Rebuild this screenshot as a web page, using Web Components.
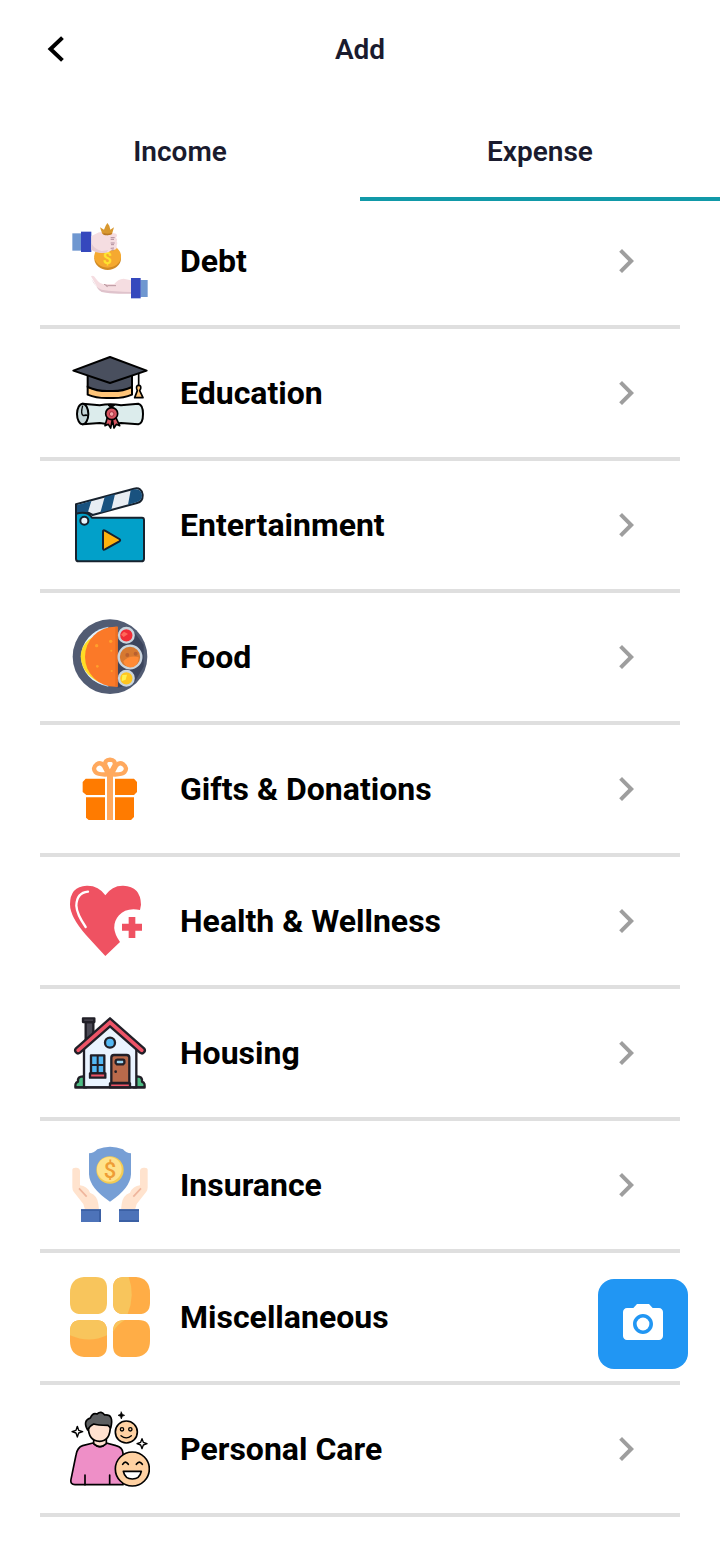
<!DOCTYPE html>
<html lang="en">
<head>
<meta charset="utf-8">
<meta name="viewport" content="width=device-width, initial-scale=1">
<title>Add</title>
<style>
    body {
        margin: 0;
        background: #fff;
        color: #000;
        font-family: Roboto, "Liberation Sans", sans-serif;
    }
</style>
</head>
<body>
<add-page></add-page>

<script>
// every category drawing shares the same 240x240 canvas
const ICONS = {
    debt: `
        <path fill="#6f97d0" d="M37 55h28v52H37z"/>
        <path fill="#3548bd" d="M63 50h31v61H63z"/>
        <ellipse cx="143" cy="130" rx="40" ry="35" fill="#d08a25"/>
        <ellipse cx="143" cy="124" rx="40" ry="34" fill="#f5a930"/>
        <text x="142" y="148" text-anchor="middle" font-size="48" font-weight="700" fill="#ffe32e">$</text>
        <path fill="#f5dde1" d="M94 63l14-7q8-6 18-5l36 4q10 1 9 8l-3 5q6 5 2 11 5 6 0 13 2 10-6 12l-10 2-9 6-20 2q-16-3-31-11z"/>
        <path fill="#e6cad1" d="M94 84q8 18 31 24l20-3-7 8q-26 3-44-9z"/>
        <path stroke="#b08c9c" stroke-width="3" fill="none" d="M152 68h12M152 73h10M152 84h12M153 89h9M152 100l10-1M155 105h6"/>
        <path fill="#d8982f" d="M127 57l-7-20 12 7 5-12 5-8 6 8 3 12 11-7-6 20-13 4z"/>
        <path fill="#b87725" d="M130 54q13 5 25 0v4q-12 5-25 1z"/>
        <path fill="#f5dde1" d="M93 184q3-4 9 0l12 15q10 11 21 8h28q10-15 28-16l22 5v39h-36q-30 0-52-5-7-3-12-11z"/>
        <path fill="#dfc3cc" d="M94 191q12 27 31 33 38 6 88 7v5h-36q-30 0-52-5-8-4-13-12z"/>
        <path stroke="#b9969e" stroke-width="3" fill="none" d="M132 208l10 4h26M137 212l6 3"/>
        <path fill="#6f97d0" d="M241 195h22v51h-22z"/>
        <path fill="#3548bd" d="M213 189h29v61h-29z"/>`,
    education: `
        <g stroke="#000" stroke-width="6" stroke-linejoin="round">
            <path fill="#ffc579" d="M83 118v25q29 12 67 10 38 2 66-10v-25z"/>
            <path fill="#494f5e" d="M83 83v37q31 14 67 12 36 2 66-12V83z"/>
            <path fill="#494f5e" d="M40 71l110-41 110 41-110 37z"/>
            <path fill="none" stroke-width="5" d="M236 81v36"/>
            <path fill="#ffc579" stroke-width="5" d="M230 125q-2-10 6-10t6 10l-3 6 10 21h-25l8-21z"/>
            <path fill="#dcecec" d="M68 170l51 5q32-6 64 0l52-5q14 3 14 31t-14 31l-52-4q-32 6-64 0l-51 4z"/>
            <ellipse cx="68" cy="201" rx="17" ry="31" fill="#c3d4d6"/>
            <path fill="none" stroke-width="4" d="M68 176q-7 26 2 30l13-1M68 206l12-2"/>
            <path fill="#d65561" stroke-width="5" d="M143 208l-8 28 10-4 7 11 5-25 5 25 7-11 10 4-13-28z"/>
            <circle cx="155" cy="200" r="18" fill="#d65561" stroke-width="5"/>
            <circle cx="155" cy="201" r="7" fill="#f3a1a2" stroke="#a22f3f" stroke-width="3"/>
            <path d="M144 175h20l-10 7z" stroke-width="3"/>
        </g>`,
    entertainment: `
        <g stroke="#17222e" stroke-width="6" stroke-linejoin="round">
            <path fill="#e8edf3" d="M48 76L222 29q23-5 26 18 1 21-17 25L98 108 85 101l-37 8z"/>
            <path fill="#19527f" stroke="none" d="M51 78l43-12-10 33-33 6zM134 54l31-8-11 46-33 9zM212 34l12-3q20-2 22 18 0 15-15 20l-27 8z"/>
            <path fill="#02a0c9" d="M48 104q35-9 48 12l7 0h143q6 0 6 7v116q0 8-8 8H56q-8 0-8-8z"/>
            <path fill="none" d="M48 76v33"/>
            <circle cx="73" cy="125" r="12" fill="#e8f4fc"/>
            <path fill="#ffb20d" d="M129 158q0-6 6-3l43 25q5 4 0 7l-43 24q-6 3-6-3z"/>
        </g>`,
    food: `
        <circle cx="150" cy="137" r="112" fill="#525c73"/>
        <path fill="#3c455d" d="M173 60l43-6 35 48v65l-30 51-48 12z"/>
        <path fill="#acd8f7" d="M145 47a91 91 0 0 0 0 180z"/>
        <path fill="#e4f2fb" d="M140 52a86 86 0 0 0 0 171z"/>
        <path fill="#ffdc25" d="M104 76Q64 95 62 136q2 51 54 77z"/>
        <path fill="#fb7928" d="M173 47h-8a90 90 0 0 0 0 180h8z"/>
        <path fill="#ec6e22" d="M166 47h7v180h-7z"/>
        <g fill="#ffa02c"><circle cx="110" cy="104" r="5"/><circle cx="152" cy="91" r="5"/><circle cx="154" cy="119" r="3"/><circle cx="112" cy="166" r="4"/><circle cx="155" cy="180" r="3"/></g>
        <g stroke="#c9d4dd" stroke-width="7">
            <circle cx="199" cy="73" r="22" fill="#f12d36"/>
            <circle cx="210" cy="138" r="34" fill="#d77930"/>
            <circle cx="199" cy="202" r="22" fill="#ffc51f"/>
        </g>
        <path fill="#ff8a35" d="M190 151q18-20 46-12 1 18-15 29-25 6-31-17z"/>
        <g fill="#b9602f"><circle cx="202" cy="132" r="6"/><circle cx="227" cy="128" r="6"/></g>
        <path fill="#ff695a" d="M192 62l12 7-13 9-8-7z"/>
        <path fill="#fff04d" d="M187 192l14-1-4 15-12 5z"/>`,
    gifts: `
        <path fill="#ff7b00" d="M77 107h58v49H79l-11-9v-30zM165 107h57l9 10v30l-9 9h-57zM78 163h57v68H86l-8-7zM165 163h57v59l-9 9h-48z"/>
        <path fill="#ffa95e" d="M141 94h18v137h-18z"/>
        <g fill="none" stroke="#ffa95e" stroke-width="13">
            <path d="M145 94l-13-25q-9-13-22-5-14 11-3 24 8 8 38 6z"/>
            <path d="M155 94l13-25q9-13 22-5 14 11 3 24-8 8-38 6z"/>
            <path d="M149 93l-13-27q-3-15 14-16 17 1 14 16z"/>
        </g>`,
    health: `
        <path fill="#ef5262" d="M136 243Q108 213 78 180 30 126 30 88q0-54 50-56 36-1 56 29 20-30 54-29 52 2 53 57l-3 16q-42-8-63 16-30 34 3 80z"/>
        <path fill="none" stroke="#fff" stroke-width="7" stroke-linecap="round" d="M84 50q-34 3-35 42 1 25 28 64"/>
        <path fill="#ef5262" d="M206 126h20v20h20v21h-20v22h-20v-22h-20v-21h20z"/>`,
    housing: `
        <g stroke="#211f27" stroke-width="7" stroke-linejoin="round">
            <path fill="#4ebc84" d="M48 241q-6-11 6-17-2-16 15-16l10 4v29zM252 241q6-11-6-17 2-16-15-16l-10 4v29z"/>
            <path fill="#4c4a55" d="M77 98V45h23v38z"/>
            <path fill="#4c4a55" d="M69 34h34v11H69z"/>
            <path fill="#eaf4ff" d="M72 112l78-68 79 68v129H72z"/>
            <path fill="#ee5467" d="M150 34L47 125q-4 6 1 11 5 6 12 1l90-79 90 79q7 5 12-1 5-5 1-11z"/>
            <circle cx="150" cy="107" r="15" fill="#54b8f3"/>
            <path fill="#54b8f3" d="M93 145h40v54H93z"/>
            <path fill="none" stroke-width="6" d="M113 145v54M93 174h40"/>
            <path fill="#ee5467" d="M90 199h46v13H90z"/>
            <path fill="#b96a4b" d="M154 228v-76q0-8 8-8h38q8 0 8 8v76z"/>
            <path fill="#9ad5f2" d="M167 162q1-4 5-4h17q4 0 4 4v6l-4 4h-18l-4-4z"/>
            <path fill="#ee5467" d="M150 229h60v12h-60z"/>
            <path fill="none" d="M43 241h214"/>
        </g>
        <circle cx="167" cy="194" r="4" fill="#211f27"/>`,
    insurance: `
        <path fill="#779fd5" d="M87 43q14 0 25-12 38-15 77 0 10 12 24 12v63q-2 42-63 82-61-40-63-82z"/>
        <circle cx="150" cy="93" r="41" fill="#f3cb54"/>
        <circle cx="148" cy="91" r="37" fill="#ffe28b"/>
        <text x="150" y="116" text-anchor="middle" font-size="66" font-weight="500" fill="#ef9d35">$</text>
        <path fill="#ffe3ce" d="M37 92q0-7 12-6 11 1 11 10v43q21 2 30 22 23 9 25 34l2 17H75l-5-17-29-37q-4-5-4-13zM263 92q0-7-12-6-11 1-11 10v43q-21 2-30 22-23 9-25 34l-2 17h42l5-17 29-37q4-5 4-13z"/>
        <path stroke="#efb69d" stroke-width="5" fill="none" d="M57 148l23 25M243 148l-23 25"/>
        <path fill="#4d73b9" d="M63 211h60v38H63zM177 211h60v38h-60z"/>
        <path fill="#3b60a4" d="M63 211h60v5H63zM177 211h60v5h-60zM117 216h6v33h-6zM177 243h60v6h-60z"/>`,
    misc: `
        <path fill="#f8c55c" d="M72 18h35q34 0 34 34v43q0 34-34 34H64q-34 0-34-34V66q0-44 42-48z"/>
        <path fill="#ffad46" d="M193 18h35q42 4 42 48v29q0 34-34 34h-43q-34 0-34-34V52q0-34 34-34z"/>
        <path fill="#f8c55c" d="M193 18h13q20 54-3 111h-10q-34 0-34-34V52q0-34 34-34z"/>
        <path fill="#ffad46" d="M64 147h43q34 0 34 34v43q0 34-34 34H72q-42-4-42-48v-29q0-34 34-34z"/>
        <path fill="#f8c55c" d="M64 147h43q34 0 34 34v12q-53 25-111 0v-12q0-34 34-34z"/>
        <path fill="#ffad46" d="M193 147h43q34 0 34 34v29q0 44-42 48h-35q-34 0-34-34v-43q0-34 34-34z"/>
        <path fill="#f8c55c" d="M159 183q0-36 36-36-24 13-36 36z"/>`,
    care: `
        <g stroke="#000" stroke-width="5" stroke-linejoin="round" stroke-linecap="round">
            <path fill="#ee8fc7" d="M99 120l-31 8q-16 5-20 28L33 229q-3 16 12 16h144V151q-1-18-21-23l-29-8q-19 22-40 0z"/>
            <path fill="#ffe1d0" d="M101 106v16q19 18 38 0v-16z"/>
            <path fill="#ffe1d0" d="M85 69q-1 45 34 46 32-1 32-46l-15-11H94z"/>
            <path fill="#5d5f61" d="M83 81q-16-28 8-36 7-17 20-12 13-11 23 3 29-3 18 39l-8-8q-32 0-43-4-10 4-18 18z"/>
            <path fill="none" d="M75 216v29M149 216v26"/>
            <circle cx="199" cy="87" r="33" fill="#ffd1a2"/>
            <circle cx="217" cy="198" r="51" fill="#ffd1a2"/>
            <circle cx="186" cy="79" r="5" fill="#ffd1a2" stroke-width="4"/>
            <circle cx="211" cy="79" r="5" fill="#ffd1a2" stroke-width="4"/>
            <path fill="none" stroke-width="4" d="M183 98q16 13 31 0"/>
            <path fill="none" d="M188 184q8-13 17 0M229 184q9-13 18 0"/>
            <path fill="#fff" d="M190 205h54q-5 23-27 23t-27-23z"/>
            <path fill="#fff" stroke-width="4" d="M52 70l4 12 12 4-12 4-4 12-4-12-12-4 12-4zM246 107l4 11 11 4-11 4-4 11-4-11-11-4 11-4z"/>
            <path stroke-width="2" d="M184 27l3 7 7 3-7 3-3 8-3-8-7-3 7-3z"/>
        </g>`
};

class CategoryIcon extends HTMLElement {
    constructor() {
        super();
        this.attachShadow({ mode: 'open' });
    }

    connectedCallback() {
        this.shadowRoot.innerHTML = `
            <style>
                :host {
                    display: block;
                    width: 80px;
                    height: 80px;
                    flex: none;
                }

                svg {
                    display: block;
                    width: 100%;
                    height: 100%;
                }
            </style>
            <svg viewBox="30 18 240 240" aria-hidden="true">${ICONS[this.getAttribute('name')] || ''}</svg>
        `;
    }
}

const barTemplate = document.createElement('template');
barTemplate.innerHTML = `
    <style>
        :host {
            display: block;
        }

        header {
            display: grid;
            grid-template-columns: 48px 1fr 48px;
            align-items: center;
            height: 100px;
            padding: 0 32px;
            color: #1a1b2e;
        }

        button {
            width: 48px;
            height: 48px;
            padding: 0;
            border: none;
            background: transparent;
            color: #000;
            cursor: pointer;
        }

        svg {
            display: block;
        }

        h1 {
            margin: 0;
            font-size: 28px;
            line-height: 32px;
            font-weight: 600;
            text-align: center;
        }
    </style>
    <header>
        <button type="button" aria-label="Back">
            <svg width="48" height="48" viewBox="0 0 48 48" fill="none" stroke="currentColor" stroke-width="4" aria-hidden="true">
                <path d="M29 13L18.500 23l10.500 10" stroke-linecap="square"/>
            </svg>
        </button>
        <h1><slot></slot></h1>
    </header>
`;

class AppBar extends HTMLElement {
    constructor() {
        super();
        this.attachShadow({ mode: 'open' });
        this.shadowRoot.appendChild(barTemplate.content.cloneNode(true));
    }
}

const tabTemplate = document.createElement('template');
tabTemplate.innerHTML = `
    <style>
        :host {
            display: block;
            flex: 1;
        }

        button {
            position: relative;
            display: block;
            width: 100%;
            height: 97px;
            padding: 6px 0 0;
            border: none;
            background: transparent;
            color: #1a1b2e;
            font: 600 28px/32px Roboto, "Liberation Sans", sans-serif;
            text-align: center;
            cursor: pointer;
        }

        /* the indicator hangs over the top of the scrolled list */
        :host([selected]) button::after {
            content: "";
            position: absolute;
            top: 100%;
            left: 0;
            right: 0;
            height: 4px;
            background: #1199a8;
        }
    </style>
    <button type="button"><slot></slot></button>
`;

class AppTab extends HTMLElement {
    constructor() {
        super();
        this.attachShadow({ mode: 'open' });
        this.shadowRoot.appendChild(tabTemplate.content.cloneNode(true));
    }

    connectedCallback() {
        const button = this.shadowRoot.querySelector('button');
        button.setAttribute('aria-pressed', String(this.hasAttribute('selected')));
    }
}

const itemTemplate = document.createElement('template');
itemTemplate.innerHTML = `
    <style>
        :host {
            display: block;
            border-bottom: 4px solid #dfdfdf;
        }

        a {
            display: flex;
            align-items: center;
            gap: 30px;
            height: 128px;
            padding: 0 30px;
            color: #000;
            text-decoration: none;
        }

        .label {
            flex: 1;
            font-size: 32px;
            line-height: 40px;
            font-weight: 700;
        }

        .chevron {
            flex: none;
            fill: #9e9e9e;
        }
    </style>
    <a href="#">
        <slot name="icon"></slot>
        <span class="label"><slot></slot></span>
        <svg class="chevron" width="48" height="48" viewBox="0 0 24 24" aria-hidden="true">
            <path d="M10 6L8.59 7.41 13.17 12l-4.58 4.59L10 18l6-6z"/>
        </svg>
    </a>
`;

class CategoryItem extends HTMLElement {
    constructor() {
        super();
        this.attachShadow({ mode: 'open' });
        this.shadowRoot.appendChild(itemTemplate.content.cloneNode(true));
    }
}

const cameraTemplate = document.createElement('template');
cameraTemplate.innerHTML = `
    <style>
        :host {
            display: block;
            position: fixed;
            right: 32px;
            bottom: 172px;
        }

        button {
            display: grid;
            place-items: center;
            width: 90px;
            height: 90px;
            padding: 0;
            border: none;
            border-radius: 16px;
            background: #2196f3;
            color: #fff;
            cursor: pointer;
        }
    </style>
    <button type="button" aria-label="Scan receipt">
        <svg width="48" height="48" viewBox="0 0 24 24" fill="currentColor" aria-hidden="true">
            <circle cx="12" cy="12" r="3.2"/>
            <path d="M9 2L7.17 4H4c-1.1 0-2 .9-2 2v12c0 1.1.9 2 2 2h16c1.1 0 2-.9 2-2V6c0-1.1-.9-2-2-2h-3.17L15 2H9zm3 15c-2.76 0-5-2.24-5-5s2.24-5 5-5 5 2.24 5 5-2.24 5-5 5z"/>
        </svg>
    </button>
`;

class CameraButton extends HTMLElement {
    constructor() {
        super();
        this.attachShadow({ mode: 'open' });
        this.shadowRoot.appendChild(cameraTemplate.content.cloneNode(true));
    }
}

const pageTemplate = document.createElement('template');
pageTemplate.innerHTML = `
    <style>
        :host {
            display: block;
        }

        nav {
            display: flex;
        }

        main {
            padding: 0 40px 24px;
        }
    </style>
    <app-bar>Add</app-bar>
    <nav aria-label="Entry type">
        <app-tab>Income</app-tab>
        <app-tab selected>Expense</app-tab>
    </nav>
    <main>
        <category-item><category-icon slot="icon" name="debt"></category-icon>Debt</category-item>
        <category-item><category-icon slot="icon" name="education"></category-icon>Education</category-item>
        <category-item><category-icon slot="icon" name="entertainment"></category-icon>Entertainment</category-item>
        <category-item><category-icon slot="icon" name="food"></category-icon>Food</category-item>
        <category-item><category-icon slot="icon" name="gifts"></category-icon>Gifts &amp; Donations</category-item>
        <category-item><category-icon slot="icon" name="health"></category-icon>Health &amp; Wellness</category-item>
        <category-item><category-icon slot="icon" name="housing"></category-icon>Housing</category-item>
        <category-item><category-icon slot="icon" name="insurance"></category-icon>Insurance</category-item>
        <category-item><category-icon slot="icon" name="misc"></category-icon>Miscellaneous</category-item>
        <category-item><category-icon slot="icon" name="care"></category-icon>Personal Care</category-item>
    </main>
    <camera-button></camera-button>
`;

class AddPage extends HTMLElement {
    constructor() {
        super();
        this.attachShadow({ mode: 'open' });
        this.shadowRoot.appendChild(pageTemplate.content.cloneNode(true));
    }
}

customElements.define('category-icon', CategoryIcon);
customElements.define('app-bar', AppBar);
customElements.define('app-tab', AppTab);
customElements.define('category-item', CategoryItem);
customElements.define('camera-button', CameraButton);
customElements.define('add-page', AddPage);
</script>
</body>
</html>
